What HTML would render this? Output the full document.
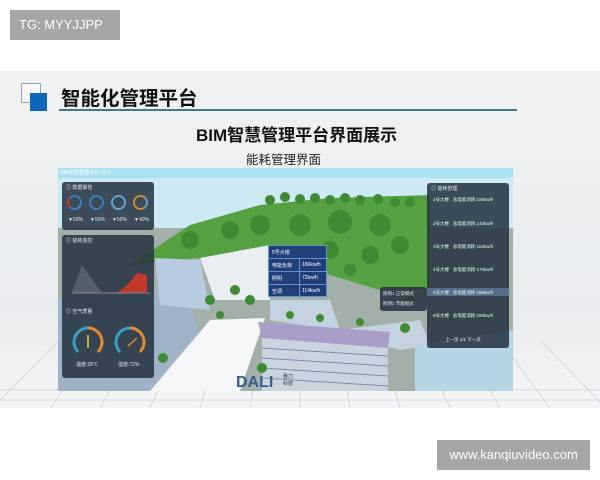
<!DOCTYPE html>
<html><head><meta charset="utf-8"><style>
*{margin:0;padding:0;box-sizing:border-box}
body{width:600px;height:480px;background:#fff;position:relative;overflow:hidden;font-family:"Liberation Sans","Noto Sans CJK SC",sans-serif}
.a{position:absolute}
.tg{left:10px;top:10px;width:110px;height:30px;background:#a6a6a6;color:#fff;font-size:13px;line-height:30px;padding-left:9px}
.wm{left:437px;top:440px;width:153px;height:30px;background:#a6a6a6;color:#fff;font-size:13px;line-height:30px;text-align:center}
.slide{left:0;top:71px;width:600px;height:337px;background:linear-gradient(#f0f2f3,#e9ecee 70%,#f4f5f6)}
.pn{background:rgba(40,52,66,.88);border-radius:3px;color:#dfe6ee;font-size:5px}
.rw{position:absolute;left:6px;color:#dfe;font-size:4.5px;white-space:nowrap}
</style></head><body>
<div class="a tg">TG: MYYJJPP</div>
<div class="a slide"></div>
<svg class="a" style="left:0;top:340px" width="600" height="68">
<g stroke="#d4d8db" stroke-width="1" fill="none">
<line x1="0" y1="50" x2="600" y2="50"/><line x1="0" y1="60" x2="600" y2="60"/>
<path d="M300 68L300 0M250 68L260 0M200 68L220 0M150 68L180 0M100 68L140 0M50 68L100 0M0 60L60 0M350 68L340 0M400 68L380 0M450 68L420 0M500 68L460 0M550 68L500 0M600 62L540 0"/>
</g></svg>
<div class="a" style="left:21px;top:83px;width:20px;height:20px;border:1px solid #9aa5ad;background:#f4f6f7"></div>
<div class="a" style="left:30px;top:93px;width:17px;height:18px;background:#1066b8"></div>
<div class="a" style="left:61px;top:82px;font-size:19.5px;font-weight:bold;color:#111">智能化管理平台</div>
<div class="a" style="left:59px;top:109px;width:458px;height:2px;background:#4c7488"></div>
<div class="a" style="left:196px;top:121px;font-size:17px;font-weight:bold;color:#111">BIM智慧管理平台界面展示</div>
<div class="a" style="left:246px;top:149px;font-size:12.5px;color:#222">能耗管理界面</div>

<svg class="a" style="left:58px;top:168px" width="455" height="223" viewBox="58 168 455 223">
<rect x="58" y="168" width="455" height="223" fill="#a3b0aa"/>
<rect x="58" y="168" width="455" height="60" fill="#cde9f4"/>
<rect x="58" y="168" width="455" height="10" fill="#a9e2f2"/>
<polygon points="58,300 58,391 150,391 200,340 190,300 130,280" fill="#9fb2c6"/>
<polygon points="130,265 190,225 260,205 330,198 430,195 430,290 380,290 330,275 300,260 250,250 200,258" fill="#55a040"/>
<g fill="#3f8a33">
<circle cx="270" cy="200" r="5"/><circle cx="285" cy="197" r="5"/><circle cx="300" cy="199" r="5"/><circle cx="315" cy="198" r="5"/><circle cx="330" cy="200" r="5"/><circle cx="345" cy="198" r="5"/><circle cx="360" cy="200" r="5"/><circle cx="378" cy="199" r="5"/><circle cx="395" cy="202" r="5"/><circle cx="410" cy="202" r="5"/>
<circle cx="230" cy="230" r="9"/><circle cx="260" cy="225" r="10"/><circle cx="300" cy="225" r="11"/><circle cx="340" cy="222" r="12"/><circle cx="380" cy="225" r="11"/><circle cx="190" cy="240" r="9"/><circle cx="330" cy="250" r="9"/><circle cx="370" cy="255" r="9"/><circle cx="400" cy="245" r="9"/><circle cx="350" cy="270" r="6"/><circle cx="300" cy="262" r="6"/>
</g>
<polygon points="200,258 270,245 270,300 215,300" fill="#e9eef2"/>
<polygon points="155,258 200,260 210,310 160,305" fill="#b9cbe0"/>
<polygon points="270,300 330,300 340,330 420,320 430,345 400,350 330,330 270,320" fill="#c5d3e0"/>
<polygon points="150,391 210,320 265,318 240,391" fill="#f4f6f7"/>
<polygon points="258,322 390,332 388,348 262,338" fill="#a99dc9"/>
<polygon points="262,338 388,348 388,391 262,391" fill="#c9d4df"/>
<g stroke="#7e8ea5" stroke-width="1"><line x1="262" y1="348" x2="388" y2="356"/><line x1="262" y1="358" x2="388" y2="366"/><line x1="262" y1="368" x2="388" y2="376"/><line x1="262" y1="378" x2="388" y2="386"/></g>
<g fill="#3f8a33"><circle cx="210" cy="300" r="5"/><circle cx="235" cy="290" r="5"/><circle cx="250" cy="300" r="5"/><circle cx="220" cy="315" r="4"/><circle cx="290" cy="315" r="4"/><circle cx="320" cy="318" r="4"/><circle cx="360" cy="322" r="4"/><circle cx="405" cy="328" r="5"/><circle cx="163" cy="358" r="5"/><circle cx="262" cy="368" r="5"/><circle cx="410" cy="300" r="5"/></g>
<polygon points="415,345 513,330 513,391 415,391" fill="#b5d5e5"/>
<text x="236" y="387" font-family="Liberation Sans" font-weight="bold" font-size="16" fill="#3a5a90">DALI</text>
<text x="283" y="378" font-size="5" fill="#333">雅力</text><text x="283" y="385" font-size="5" fill="#333">科技</text>
</svg>
<div class="a" style="left:60px;top:169px;font-size:5px;color:#fff">BIM智慧管理平台 V2.1</div>

<div class="a pn" style="left:62px;top:182px;width:92px;height:48px">
<div class="a" style="left:4px;top:2px">◎ 数据掌控</div>
<div class="a" style="left:5px;top:13px;width:15px;height:15px;border:2px solid #3c7ec0;border-left-color:#c0392b;border-radius:50%"></div>
<div class="a" style="left:27px;top:13px;width:15px;height:15px;border:2px solid #3c7ec0;border-radius:50%"></div>
<div class="a" style="left:49px;top:13px;width:15px;height:15px;border:2px solid #6aa0d8;border-radius:50%"></div>
<div class="a" style="left:71px;top:13px;width:15px;height:15px;border:2px solid #d08a3a;border-right-color:#6aa0d8;border-radius:50%"></div>
<div class="a" style="left:6px;top:35px">▼50%</div><div class="a" style="left:28px;top:35px">▼50%</div><div class="a" style="left:50px;top:35px">▼50%</div><div class="a" style="left:72px;top:35px">▼40%</div>
</div>
<div class="a pn" style="left:62px;top:235px;width:92px;height:143px">
<div class="a" style="left:4px;top:2px">◎ 能耗监控</div>
<svg class="a" style="left:0;top:10px" width="92" height="60"><polygon points="10,48 20,20 40,48" fill="#555f6a"/><polygon points="55,48 65,40 75,28 85,30 85,48" fill="#c0392b"/><line x1="10" y1="48" x2="88" y2="48" stroke="#888"/></svg>
<div class="a" style="left:4px;top:73px">◎ 空气质量</div>
<svg class="a" style="left:4px;top:83px" width="88" height="44">
<path d="M12.1 33.9A14 14 0 0 1 22 10" stroke="#3aa0c8" stroke-width="3" fill="none"/><path d="M22 10A14 14 0 0 1 31.9 33.9" stroke="#e68a30" stroke-width="3" fill="none"/>
<path d="M54.1 33.9A14 14 0 0 1 64 10" stroke="#3aa0c8" stroke-width="3" fill="none"/><path d="M64 10A14 14 0 0 1 73.9 33.9" stroke="#e68a30" stroke-width="3" fill="none"/>
<line x1="22" y1="17" x2="22" y2="30" stroke="#e7d040" stroke-width="1.5"/><line x1="62" y1="28" x2="71" y2="20" stroke="#e68a30" stroke-width="1.5"/></svg>
<div class="a" style="left:14px;top:126px">温度:28℃</div><div class="a" style="left:56px;top:126px">湿度:72%</div>
</div>
<div class="a pn" style="left:427px;top:183px;width:82px;height:165px">
<div class="a" style="left:4px;top:2px">◎ 能耗管理</div>
<div class="rw" style="top:14px">1号大楼 &nbsp; 总电能消耗:180kw/h</div>
<div class="rw" style="top:38px">2号大楼 &nbsp; 总电能消耗:145kw/h</div>
<div class="rw" style="top:61px">3号大楼 &nbsp; 总电能消耗:152kw/h</div>
<div class="rw" style="top:84px">4号大楼 &nbsp; 总电能消耗:170kw/h</div>
<div class="a" style="left:0;top:105px;width:82px;height:8px;background:rgba(120,150,200,.5)"></div>
<div class="rw" style="top:107px">5号大楼 &nbsp; 总电能消耗:186kw/h</div>
<div class="rw" style="top:130px">6号大楼 &nbsp; 总电能消耗:180kw/h</div>
<div class="rw" style="top:154px;left:18px">上一页 1/1 下一页</div>
</div>
<div class="a pn" style="left:380px;top:287px;width:47px;height:24px;font-size:4.5px"><div class="a" style="left:3px;top:4px">照明1 正常模式</div><div class="a" style="left:3px;top:14px">照明2 节能模式</div></div>
<div class="a" style="left:268px;top:245px;width:59px;height:52px;background:#1f3f7a;border:1px solid #6d8fc8;color:#fff;font-size:5px">
<div class="a" style="left:3px;top:3px">5号大楼</div>
<div class="a" style="left:0;top:12px;width:59px;border-top:1px solid #6d8fc8"></div>
<div class="a" style="left:3px;top:16px">电能负荷</div><div class="a" style="left:33px;top:16px">186kw/h</div>
<div class="a" style="left:0;top:25px;width:59px;border-top:1px solid #6d8fc8"></div>
<div class="a" style="left:3px;top:29px">照明</div><div class="a" style="left:33px;top:29px">72kw/h</div>
<div class="a" style="left:0;top:38px;width:59px;border-top:1px solid #6d8fc8"></div>
<div class="a" style="left:3px;top:42px">空调</div><div class="a" style="left:33px;top:42px">114kw/h</div>
<div class="a" style="left:30px;top:12px;height:40px;border-left:1px solid #6d8fc8"></div>
</div>
<div class="a wm">www.kanqiuvideo.com</div>
</body></html>
